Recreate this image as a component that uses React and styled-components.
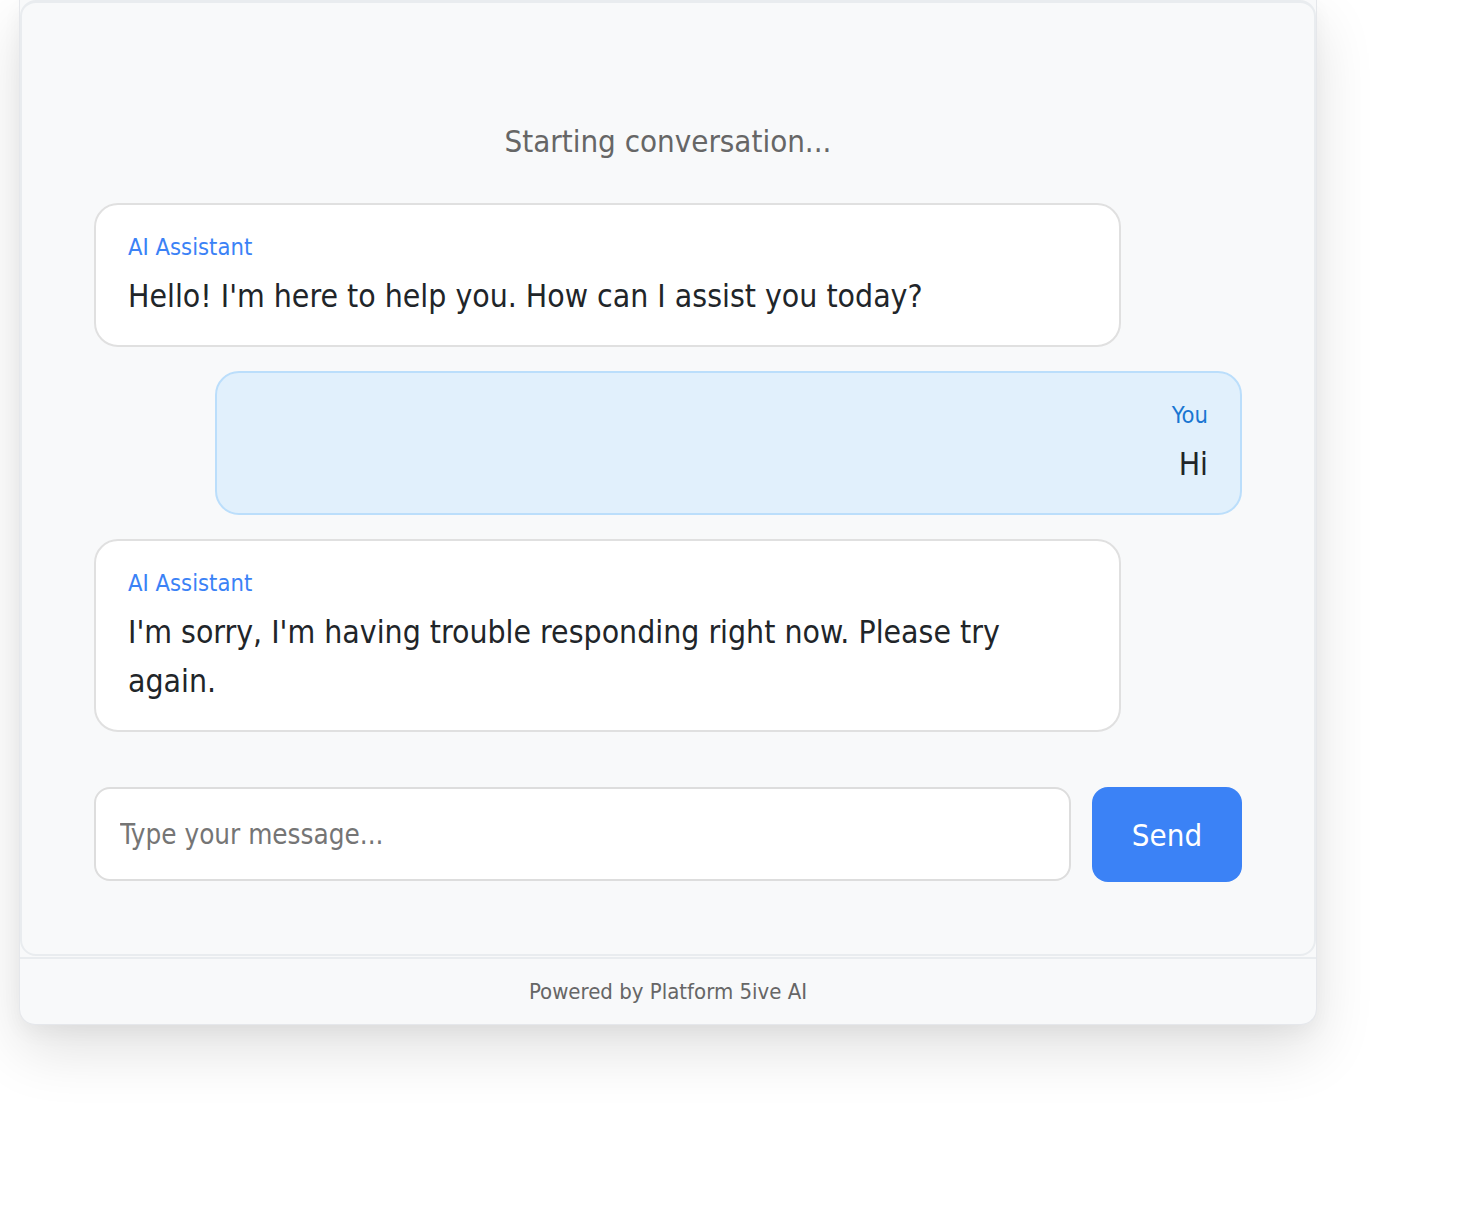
import React from "react";
import styled, { createGlobalStyle } from "styled-components";

const GlobalStyle = createGlobalStyle`
  body {
    margin: 0;
    background: #ffffff;
    font-family: "DejaVu Sans Condensed", "DejaVu Sans", sans-serif;
  }
`;

const Page = styled.div`
  padding: 0 0 160px 19px;
`;

const Widget = styled.div`
  width: 1298px;
  box-sizing: border-box;
  background: #f8f9fa;
  border: 1px solid #e5e7eb;
  border-top: none;
  border-radius: 0 0 16px 16px;
  box-shadow: 0 25px 60px rgba(0, 0, 0, 0.12), 0 8px 20px rgba(0, 0, 0, 0.04);
  display: flex;
  flex-direction: column;
`;

const Chat = styled.div`
  background: #f8f9fa;
  border: 2px solid #e9ecef;
  border-top-width: 3px;
  border-radius: 16px;
  padding: 118px 72px 72px;
  display: flex;
  flex-direction: column;
`;

const Status = styled.div`
  text-align: center;
  color: #666666;
  font-size: 31px;
  line-height: 40px;
  margin-bottom: 42px;
`;

const Messages = styled.div`
  display: flex;
  flex-direction: column;
  gap: 24px;
`;

const Bubble = styled.div`
  box-sizing: border-box;
  width: 1027px;
  align-self: ${(p) => (p.$user ? "flex-end" : "flex-start")};
  text-align: ${(p) => (p.$user ? "right" : "left")};
  background: ${(p) => (p.$user ? "#e1f0fc" : "#ffffff")};
  border: 2px solid ${(p) => (p.$user ? "#bbdefb" : "#e0e0e0")};
  border-radius: 24px;
  padding: 24px 32px;
`;

const Sender = styled.div`
  font-size: 23.6px;
  line-height: 36px;
  color: ${(p) => (p.$user ? "#1976d2" : "#3b82f6")};
  margin-bottom: 7px;
`;

const Text = styled.div`
  font-size: 31.7px;
  line-height: 49px;
  color: #212529;
`;

const InputRow = styled.div`
  display: flex;
  gap: 21px;
  margin-top: 55px;
`;

const Input = styled.input`
  flex: 1;
  height: 94px;
  box-sizing: border-box;
  border: 2px solid #dddddd;
  border-radius: 16px;
  background: #ffffff;
  padding: 0 24px;
  font-family: inherit;
  font-size: 27.6px;
  color: #212529;
  outline: none;
  &::placeholder {
    color: #757575;
  }
`;

const SendButton = styled.button`
  width: 150px;
  height: 95px;
  border: none;
  border-radius: 16px;
  background: #3b82f6;
  color: #ffffff;
  font-family: inherit;
  font-size: 31px;
`;

const Footer = styled.div`
  height: 65px;
  margin-top: 1px;
  border-top: 2px solid #e9ecef;
  display: flex;
  align-items: center;
  justify-content: center;
  color: #666666;
  font-size: 22px;
`;

const messages = [
  { user: false, text: "Hello! I'm here to help you. How can I assist you today?" },
  { user: true, text: "Hi" },
  { user: false, text: "I'm sorry, I'm having trouble responding right now. Please try again." },
];

export default function App() {
  return (
    <Page>
      <GlobalStyle />
      <Widget>
        <Chat>
          <Status>Starting conversation...</Status>
          <Messages>
            {messages.map((m, i) => (
              <Bubble key={i} $user={m.user}>
                <Sender $user={m.user}>{m.user ? "You" : "AI Assistant"}</Sender>
                <Text>{m.text}</Text>
              </Bubble>
            ))}
          </Messages>
          <InputRow>
            <Input placeholder="Type your message..." />
            <SendButton>Send</SendButton>
          </InputRow>
        </Chat>
        <Footer>Powered by Platform 5ive AI</Footer>
      </Widget>
    </Page>
  );
}
